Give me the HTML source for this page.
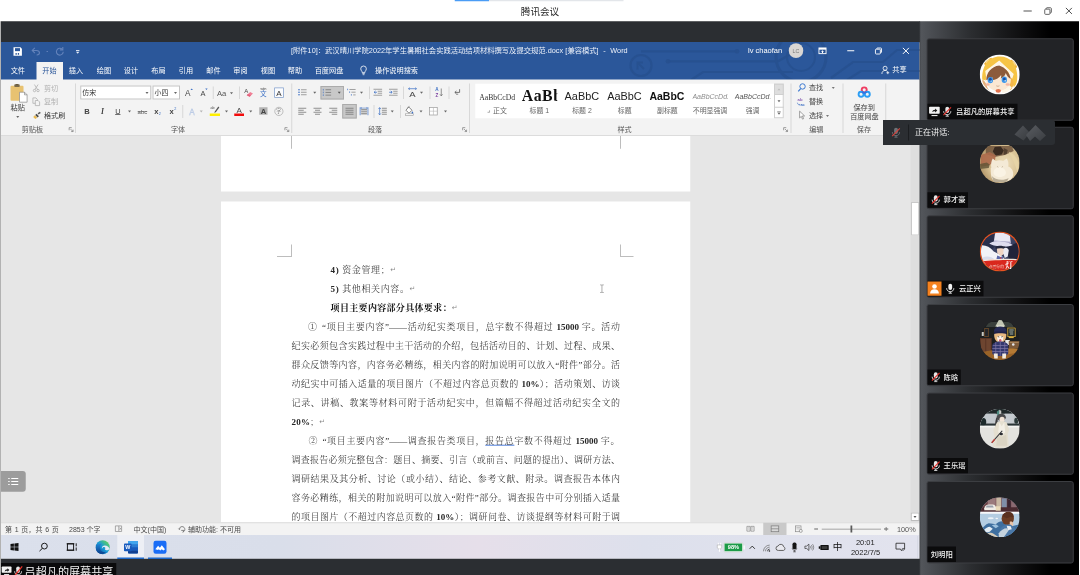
<!DOCTYPE html>
<html lang="zh-CN">
<head>
<meta charset="utf-8">
<title>腾讯会议</title>
<style>
*{box-sizing:border-box;margin:0;padding:0}
html,body{width:1080px;height:575px;overflow:hidden;background:#fff}body{position:relative}
body{font-family:"Liberation Sans","Noto Sans CJK SC",sans-serif;color:#333;-webkit-font-smoothing:antialiased}
#wrap{position:absolute;left:0;top:0;width:4320px;height:2300px;overflow:hidden;transform:scale(.25);transform-origin:0 0}#root{position:relative;width:1080px;height:590px;overflow:hidden;background:#fff;zoom:4;filter:blur(.35px)}
.abs{position:absolute}
.t{position:absolute;white-space:nowrap;line-height:1;transform:translate(-50%,-50%)}
.tl{position:absolute;white-space:nowrap;line-height:1;transform:translate(0,-50%)}
/* Tencent meeting chrome */
#tmtitle{left:540px;top:12px;font-size:9.6px;color:#2a2a2a}
#darktop{left:1px;top:21.3px;width:919px;height:21px;background:#2b2e32}
#darkbot{left:1px;top:558.7px;width:919px;height:32px;background:#2b2e32}
/* Word */
#wtitle{left:1px;top:42px;width:918.6px;height:38px;background:#2b579a;overflow:hidden}
#ribbon{left:1px;top:79.6px;width:918.6px;height:56.3px;background:#f3f3f3;border-bottom:1px solid #d2d2d2}
#doc{left:1px;top:135.4px;width:918.6px;height:387px;background:#e6e6e6;overflow:hidden}
#status{left:1px;top:522.3px;width:918.6px;height:12.6px;background:#f3f3f3;border-top:1px solid #dcdcdc}
#taskbar{left:1px;top:534.9px;width:918.6px;height:23.9px;background:linear-gradient(90deg,#dbe0ec 0%,#d9deea 30%,#e6dfea 52%,#dde0ec 70%,#e2e3ee 100%)}
/* right panel */
#panel{left:919.6px;top:21.3px;width:159.3px;height:569px;background:linear-gradient(90deg,#3a3d41 0,#3a3d41 .6px,#53565b 1.2px,#4d5055 8px,#2c2e31 50px,#0d0d0e 105px,#000 130px)}
.card{position:absolute;left:926.6px;width:147.1px;height:82.4px;background:#222326;border:1.2px solid #3c3e42;border-radius:2.5px}

.card .av{position:absolute;left:52.2px;top:15.2px;width:40px;height:40px}
.lab{position:absolute;left:0;bottom:0.5px;height:15.4px;background:#0b0b0c;color:#f4f4f4;font-size:7.3px;font-weight:500;line-height:15.4px;white-space:nowrap;padding-left:16px;padding-right:2.6px}
.lab svg{position:absolute}
.mic{left:3.2px;top:2.2px;width:10px;height:11px}
#tip{left:882.9px;top:119.9px;width:172px;height:25.1px;background:#2b2e32;border-radius:0 3px 3px 0}

.w{color:#fff;font-size:7.15px}
.tab{position:absolute;top:70.6px;white-space:nowrap;line-height:1;transform:translate(-50%,-50%);font-size:7.15px;color:#fff}
#tabon{left:36.6px;top:62px;width:26.4px;height:18px;background:#f3f3f3}
svg.i{position:absolute;overflow:visible}

.r{position:absolute;white-space:nowrap;line-height:1;transform:translate(-50%,-50%);font-size:7.1px;color:#444}
.rl{position:absolute;white-space:nowrap;line-height:1;transform:translate(0,-50%);font-size:7.1px;color:#444}
.sep{position:absolute;width:1px;background:#d8d8d8}
.arr{position:absolute;width:0;height:0;border-left:1.7px solid transparent;border-right:1.7px solid transparent;border-top:2px solid #666;transform:translate(-50%,-50%)}
.box{position:absolute;background:#fff;border:1px solid #c4c4c4}
.hl{position:absolute;background:#c8c8c8;border:1px solid #ababab}
.gl{color:#555}

.page{position:absolute;left:221px;width:469.3px;background:#fff}
.ln{position:absolute;left:291.5px;width:328.6px;height:12px;line-height:12px;font-family:"Liberation Serif","Noto Serif CJK SC",serif;font-size:9px;font-weight:300;color:#1e1e1e;white-space:nowrap;text-align:justify;text-align-last:justify}
.ln.s{text-align:left;text-align-last:left;letter-spacing:.62px;width:auto}
.ln b{font-weight:700;color:#111}
.pm{color:#8c8c8c;font-family:"DejaVu Sans",sans-serif;font-size:7px;position:relative;top:-1px;letter-spacing:0;font-weight:400}
.crop{position:absolute;background:#bdbdbd}
.num{font-family:"Liberation Serif",serif;font-weight:700;color:#262626}

.st{position:absolute;white-space:nowrap;line-height:1;transform:translate(0,-50%);font-size:7px;color:#4a4a4a;top:529.2px}
.tk{position:absolute;white-space:nowrap;line-height:1;transform:translate(-50%,-50%);color:#1a1a1a}
</style>
</head>
<body>
<div id="wrap"><div id="root">
<div id="tmtitle" class="t">腾讯会议</div>
<span class="abs" style="left:454.700px;top:0;width:34.300px;height:1.300px;background:#4a9cf5"></span><span class="abs" style="left:489px;top:0;width:134.600px;height:1.200px;background:#e3e6ea"></span><span class="abs" style="left:1023.400px;top:10.600px;width:8.400px;height:1px;background:#555"></span><svg class="i" style="left:1044.300px;top:7.200px;width:7.600px;height:7.600px" viewBox="0 0 7.600 7.600"><rect x=".5" y="1.900" width="5.200" height="5.200" rx=".8" fill="none" stroke="#555" stroke-width=".9"/><path d="M1.900 1.800V1.300c0-.4.300-.8.800-.8h3.600c.4 0 .8.400.8.800v3.600c0 .5-.4.800-.8.800h-.5" fill="none" stroke="#555" stroke-width=".9"/></svg><svg class="i" style="left:1065.500px;top:7.600px;width:6.800px;height:6.800px" viewBox="0 0 6.800 6.800"><path d="M.4.400l6 6M6.400.4l-6 6" stroke="#444" stroke-width=".95"/></svg>
<span class="abs" style="left:0;top:21.3px;width:1px;height:569px;background:#b2b2b2"></span><div id="darktop" class="abs"></div>
<div id="wtitle" class="abs"><svg class="i" style="left:600px;top:0;width:319px;height:38px" viewBox="600 42 319 38"><g fill="none" stroke="#27508f" stroke-width="2.200" opacity=".85"><circle cx="640" cy="65.500" r="10.500"/><path d="M636.500 69.500v-7h5.500M636.500 62.500l6.500 6.500" stroke-width="1.800"/><path d="M667 61.300h110l16 -9"/><path d="M640 51.300h96"/><circle cx="800" cy="57" r="25" stroke-width="3"/><circle cx="800" cy="57" r="14" stroke-width="2"/><path d="M690 80l12-8h90"/><path d="M830 78l22-16h30l14-12h24"/><path d="M846 80l14-9h60"/></g><g fill="#27508f" opacity=".85"><circle cx="667" cy="61.300" r="2.400"/><circle cx="736" cy="51.300" r="2.400"/></g></svg></div>
<svg class="i" style="left:13.5px;top:47.2px;width:8.400px;height:8.400px" viewBox="0 0 8.400 8.400"><path d="M0 0h7l1.400 1.400v7H0z" fill="#fff"/><rect x="1.500" y="0.900" width="5" height="3" fill="#2b579a"/><rect x="2" y="5.800" width="1.300" height="1.700" fill="#2b579a"/><rect x="4.300" y="5.800" width="1.300" height="1.700" fill="#2b579a"/></svg>
<svg class="i" style="left:31.200px;top:47.300px;width:9px;height:8px" viewBox="0 0 9 8"><path d="M3.600 0.600L1 3.200l2.600 2.600M1 3.200h4.200c1.900 0 3 1.200 3 2.400S7 7.800 5.400 7.800" fill="none" stroke="#6483bb" stroke-width="1.100"/></svg>
<span class="abs" style="left:46.500px;top:51px;width:1.600px;height:1px;background:#5f7fb8"></span>
<svg class="i" style="left:55.500px;top:47px;width:8.600px;height:8.600px" viewBox="0 0 8.600 8.600"><path d="M6.800 2.400A3.400 3.400 0 1 0 7.700 4.700" fill="none" stroke="#6483bb" stroke-width="1.100"/><path d="M7.300 0v2.900H4.400" fill="none" stroke="#6483bb" stroke-width="1.100"/></svg>
<svg class="i" style="left:76px;top:50px;width:3.400px;height:4px" viewBox="0 0 3.400 4"><rect width="3.400" height=".9" fill="#e8eef8"/><path d="M0 1.800h3.400L1.700 3.800z" fill="#e8eef8"/></svg>
<span class="tl w" style="left:291px;top:50.700px;color:#eef2fa;font-size:7.3px;word-spacing:.3px">[附件10]：武汉晴川学院2022年学生暑期社会实践活动结项材料撰写及提交规范.docx [兼容模式]&nbsp; -&nbsp; Word</span>
<span class="tl w" style="left:748px;top:50.700px;font-size:7.500px">lv chaofan</span>
<span class="abs" style="left:788.700px;top:43.300px;width:14.600px;height:14.600px;border-radius:50%;background:#d9d6d3"></span><span class="t" style="left:796px;top:50.900px;font-size:5.300px;color:#7a7a7a">LC</span>
<svg class="i" style="left:818.400px;top:47.400px;width:8px;height:6.600px" viewBox="0 0 8 6.600"><rect x=".45" y=".45" width="7.100" height="5.700" fill="none" stroke="#fff" stroke-width=".9"/><rect x=".45" y=".45" width="7.100" height="1.700" fill="#fff"/><path d="M4 2.700l1.500 1.600H4.500v1.200h-1V4.300h-1z" fill="#fff"/></svg>
<span class="abs" style="left:847.300px;top:50.300px;width:7px;height:1px;background:#fff"></span>
<svg class="i" style="left:875px;top:47.400px;width:7px;height:7px" viewBox="0 0 7 7"><rect x=".45" y="1.700" width="4.900" height="4.800" rx=".8" fill="none" stroke="#fff" stroke-width=".9"/><path d="M1.800 1.600V1.200c0-.4.300-.7.700-.7h3.300c.4 0 .7.300.7.700v3.300c0 .4-.3.700-.7.700h-.4" fill="none" stroke="#fff" stroke-width=".9"/></svg>
<svg class="i" style="left:902.600px;top:47.400px;width:6.800px;height:6.800px" viewBox="0 0 6.800 6.800"><path d="M.4.400l6 6M6.400.4l-6 6" stroke="#fff" stroke-width="1"/></svg>
<div id="tabon" class="abs"></div>
<span class="tab" style="left:17.8px;color:#fff">文件</span>
<span class="tab" style="left:49.5px;color:#2b579a">开始</span>
<span class="tab" style="left:76px;color:#fff">插入</span>
<span class="tab" style="left:104px;color:#fff">绘图</span>
<span class="tab" style="left:131px;color:#fff">设计</span>
<span class="tab" style="left:158.5px;color:#fff">布局</span>
<span class="tab" style="left:186px;color:#fff">引用</span>
<span class="tab" style="left:213.5px;color:#fff">邮件</span>
<span class="tab" style="left:240.5px;color:#fff">审阅</span>
<span class="tab" style="left:268px;color:#fff">视图</span>
<span class="tab" style="left:295px;color:#fff">帮助</span>
<span class="tab" style="left:329px;color:#fff">百度网盘</span>
<span class="tab" style="left:396.5px;color:#fff">操作说明搜索</span>
<svg class="i" style="left:360.200px;top:65.500px;width:6.600px;height:9.600px" viewBox="0 0 6.600 9.600"><path d="M3.300.5A2.800 2.800 0 0 0 .5 3.300c0 1.200.7 1.800 1.100 2.500.3.500.4.900.4 1.400h2.600c0-.5.100-.9.400-1.400.4-.7 1.100-1.300 1.100-2.500A2.800 2.800 0 0 0 3.300.5z" fill="none" stroke="#fff" stroke-width=".8"/><path d="M2.100 8.100h2.400M2.400 9.200h1.800" stroke="#fff" stroke-width=".7"/></svg>
<svg class="i" style="left:881.500px;top:65.800px;width:8px;height:8.400px" viewBox="0 0 8 8.400"><circle cx="3.600" cy="2.500" r="2" fill="none" stroke="#fff" stroke-width=".8"/><path d="M.4 8.200c0-2.300 1.400-3.500 3.200-3.500 1 0 1.800.3 2.400 1" fill="none" stroke="#fff" stroke-width=".8"/><path d="M6.300 5.600v2.800M4.900 7h2.800" stroke="#fff" stroke-width=".8"/></svg>
<span class="tl w" style="left:892.300px;top:69.600px">共享</span>
<div id="ribbon" class="abs"></div>
<span class="sep" style="left:75px;top:83.5px;height:49.5px"></span>
<span class="sep" style="left:291.2px;top:83.5px;height:49.5px"></span>
<span class="sep" style="left:469px;top:83.5px;height:49.5px"></span>
<span class="sep" style="left:790.5px;top:83.5px;height:49.5px"></span>
<span class="sep" style="left:842.4px;top:83.5px;height:49.5px"></span>
<span class="sep" style="left:885.3px;top:83.5px;height:49.5px"></span>
<span class="r gl" style="left:32.5px;top:130px;">剪贴板</span>
<span class="r gl" style="left:178px;top:130px;">字体</span>
<span class="r gl" style="left:375px;top:130px;">段落</span>
<span class="r gl" style="left:624.5px;top:130px;">样式</span>
<span class="r gl" style="left:816.3px;top:130px;">编辑</span>
<span class="r gl" style="left:863.9px;top:130px;">保存</span>
<svg class="i" style="left:68.70px;top:127.30px;width:4.6px;height:4.6px" viewBox="0 0 4.6 4.6"><path d="M.4 3V.4H3" fill="none" stroke="#777" stroke-width=".7"/><path d="M1.800 1.800l2.400 2.400M4.300 2.400v1.900H2.400" fill="none" stroke="#777" stroke-width=".7"/></svg>
<svg class="i" style="left:284.50px;top:127.30px;width:4.6px;height:4.6px" viewBox="0 0 4.6 4.6"><path d="M.4 3V.4H3" fill="none" stroke="#777" stroke-width=".7"/><path d="M1.800 1.800l2.400 2.400M4.300 2.400v1.900H2.400" fill="none" stroke="#777" stroke-width=".7"/></svg>
<svg class="i" style="left:462.30px;top:127.30px;width:4.6px;height:4.6px" viewBox="0 0 4.6 4.6"><path d="M.4 3V.4H3" fill="none" stroke="#777" stroke-width=".7"/><path d="M1.800 1.800l2.400 2.400M4.300 2.400v1.900H2.400" fill="none" stroke="#777" stroke-width=".7"/></svg>
<svg class="i" style="left:783.30px;top:127.30px;width:4.6px;height:4.6px" viewBox="0 0 4.6 4.6"><path d="M.4 3V.4H3" fill="none" stroke="#777" stroke-width=".7"/><path d="M1.800 1.800l2.400 2.400M4.300 2.400v1.900H2.400" fill="none" stroke="#777" stroke-width=".7"/></svg>
<svg class="i" style="left:10.60px;top:83.90px;width:17px;height:18.5px" viewBox="0 0 17 18.5"><rect x="0" y="1.800" width="13" height="15" rx="1" fill="#e8c271"/><rect x="3.800" y=".3" width="5.400" height="2.800" rx=".8" fill="#7a6a4a"/><rect x="5.300" y="0" width="2.400" height="1.300" fill="#6a5c40"/><path d="M9 8.200h5l2.600 2.600v7.400H9z" fill="#fff" stroke="#8a8a8a" stroke-width=".7"/><path d="M14 8.200v2.600h2.600" fill="none" stroke="#8a8a8a" stroke-width=".7"/></svg>
<span class="r" style="left:17.7px;top:107.8px;font-size:7.2px;color:#3a3a3a">粘贴</span>
<span class="arr" style="left:17.7px;top:116.9px;border-top-color:#666"></span>
<svg class="i" style="left:32.95px;top:84.30px;width:6.5px;height:8px" viewBox="0 0 6.5 8"><path d="M1.400 0.300L4.600 5.300M5.100 0.300L1.900 5.300" stroke="#b0b0b0" stroke-width=".8"/><circle cx="1.500" cy="6.300" r="1.200" fill="none" stroke="#b0b0b0" stroke-width=".8"/><circle cx="5" cy="6.300" r="1.200" fill="none" stroke="#b0b0b0" stroke-width=".8"/></svg>
<span class="rl" style="left:44px;top:88.4px;color:#b2b2b2">剪切</span>
<svg class="i" style="left:32.45px;top:97.45px;width:7.5px;height:8.5px" viewBox="0 0 7.5 8.5"><path d="M.4.400h3l1.400 1.400v4H.4z" fill="none" stroke="#b0b0b0" stroke-width=".8"/><path d="M2.800 3h2.800l1.500 1.500v3.600H2.800z" fill="#f3f3f3" stroke="#b0b0b0" stroke-width=".8"/></svg>
<span class="rl" style="left:44px;top:101.8px;color:#b2b2b2">复制</span>
<svg class="i" style="left:33.00px;top:111.55px;width:8px;height:7.5px" viewBox="0 0 8 7.5"><path d="M4.600 1.800L6.800.2l1 1.200-2.200 1.700z" fill="#5a5a5a"/><path d="M3.600 2.200l2.300 2.500-1.400 1.300L2.200 3.500z" fill="#4a4a4a"/><path d="M1.900 3.800l2.300 2.500-1.900 1.100L.2 5.500z" fill="#e8b84f"/></svg>
<span class="rl" style="left:44px;top:115.6px;color:#3a3a3a">格式刷</span>
<span class="box" style="left:80.300px;top:85.600px;width:70.900px;height:13.800px"></span>
<span class="box" style="left:152.600px;top:85.600px;width:27.300px;height:13.800px"></span>
<span class="rl" style="left:82.3px;top:92.9px;font-size:6.9px;color:#333">仿宋</span>
<span class="rl" style="left:154.6px;top:92.9px;font-size:6.9px;color:#333">小四</span>
<span class="arr" style="left:147px;top:93px;border-top-color:#666"></span>
<span class="arr" style="left:175.6px;top:93px;border-top-color:#666"></span>
<span class="r" style="left:187.8px;top:93.1px;font-size:8.200px;color:#444">A</span>
<svg class="i" style="left:190.40px;top:88.50px;width:2.4px;height:1.6px" viewBox="0 0 2.4 1.6"><path d="M0 1.600L1.200 0l1.200 1.600z" fill="#3b6fc4"/></svg>
<span class="r" style="left:202.9px;top:93.4px;font-size:7.400px;color:#444">A</span>
<svg class="i" style="left:205.20px;top:88.60px;width:2.4px;height:1.6px" viewBox="0 0 2.4 1.6"><path d="M0 0h2.400L1.200 1.600z" fill="#3b6fc4"/></svg>
<span class="sep" style="left:212.8px;top:86.5px;height:12.5px"></span>
<span class="r" style="left:221.6px;top:92.9px;font-size:7.600px;color:#555">Aa</span>
<span class="arr" style="left:231.6px;top:93.3px;border-top-color:#666"></span>
<span class="sep" style="left:239.1px;top:86.5px;height:12.5px"></span>
<span class="r" style="left:246.2px;top:90.6px;font-size:6px;color:#444">A</span>
<svg class="i" style="left:246.70px;top:92.00px;width:6.2px;height:4.8px" viewBox="0 0 6.2 4.8"><path d="M3.400 0L6.200 1.600 2.900 4.800 0 3.200z" fill="#ef7f95"/><path d="M0 3.200l1.200-1.200 2.900 1.600L2.900 4.800z" fill="#e3607c"/></svg>
<span class="r" style="left:263.4px;top:93.7px;font-size:6.600px;color:#3b6fc4">文</span>
<span class="r" style="left:263.4px;top:88.8px;font-size:3.400px;color:#444;letter-spacing:-.1px">wén</span>
<span class="abs" style="left:274.200px;top:87.500px;width:9.600px;height:10.200px;border:.8px solid #7f9cc9;background:#fbfcfe"></span>
<span class="r" style="left:279px;top:92.9px;font-size:8px;color:#333">A</span>
<span class="r" style="left:86.9px;top:111.2px;font-size:7.600px;font-weight:700;color:#444">B</span>
<span class="r" style="left:102.6px;top:111.2px;font-size:7.600px;font-style:italic;font-weight:700;font-family:Liberation Serif,serif;color:#444">I</span>
<span class="r" style="left:117.8px;top:110.9px;font-size:7.400px;color:#444;text-decoration:underline;text-underline-offset:.6px;text-decoration-thickness:.7px">U</span>
<span class="arr" style="left:129.5px;top:111.6px;border-top-color:#666"></span>
<span class="r" style="left:142.4px;top:111.4px;font-size:6px;color:#555;text-decoration:line-through;text-decoration-thickness:.6px">abc</span>
<span class="r" style="left:156.3px;top:111.4px;font-size:7.600px;font-weight:700;color:#444">x</span>
<span class="r" style="left:159.9px;top:113.6px;font-size:3.800px;color:#3b6fc4">2</span>
<span class="r" style="left:171.6px;top:111.4px;font-size:7.600px;font-weight:700;color:#444">x</span>
<span class="r" style="left:175.3px;top:108.6px;font-size:3.800px;color:#3b6fc4">2</span>
<span class="sep" style="left:182.3px;top:105px;height:13px"></span>
<svg class="i" style="left:187.400px;top:106.600px;width:9px;height:9.600px" viewBox="0 0 9 9.600"><text x="4.500" y="8.200" text-anchor="middle" font-size="8.200" font-family="Liberation Sans,sans-serif" fill="#f8f9fc" stroke="#bccbe4" stroke-width=".5">A</text></svg>
<span class="arr" style="left:201.3px;top:111.6px;border-top-color:#b5b5b5"></span>
<svg class="i" style="left:210.40px;top:106.10px;width:9px;height:7px" viewBox="0 0 9 7"><path d="M4.300 5.400L7.800.6l1 .8-3.500 4.800-1.600.6z" fill="#555"/><text x="0" y="3.400" font-size="3.600" font-family="Liberation Sans,sans-serif" fill="#444">ab</text></svg>
<span class="abs" style="left:209.800px;top:113.600px;width:10.100px;height:2.500px;background:#ffef00"></span>
<span class="arr" style="left:226.5px;top:111.6px;border-top-color:#666"></span>
<span class="r" style="left:239.1px;top:109.9px;font-size:8px;color:#444">A</span>
<span class="abs" style="left:234.300px;top:113.600px;width:9.600px;height:2.500px;background:#f20c0c"></span>
<span class="arr" style="left:250.8px;top:111.6px;border-top-color:#666"></span>
<span class="abs" style="left:259.300px;top:107.200px;width:8.300px;height:7.600px;background:#b2b2b2"></span>
<span class="r" style="left:263.5px;top:111.1px;font-size:7.600px;font-weight:700;color:#444">A</span>
<span class="abs" style="left:274.400px;top:107px;width:8.800px;height:8.800px;border:.7px solid #8a8a8a;border-radius:50%"></span>
<span class="r" style="left:278.8px;top:111.5px;font-size:5.200px;color:#777">字</span>
<svg class="i" style="left:298.00px;top:88.80px;width:8.6px;height:7px" viewBox="0 0 8.6 7"><circle cx="1" cy="1" r=".8" fill="#3b6fc4"/><circle cx="1" cy="3.500" r=".8" fill="#3b6fc4"/><circle cx="1" cy="6" r=".8" fill="#3b6fc4"/><path d="M3 1h5.600M3 3.500h5.600M3 6h5.600" stroke="#8a8a8a" stroke-width=".8"/></svg>
<span class="arr" style="left:314.8px;top:92.7px;border-top-color:#666"></span>
<span class="hl" style="left:320.500px;top:86px;width:23.500px;height:13.400px"></span>
<svg class="i" style="left:322.50px;top:88.70px;width:8.6px;height:7.4px" viewBox="0 0 8.6 7.4"><path d="M.8.200v1.600M.8 2.900v1.600M.8 5.600v1.600" stroke="#3b6fc4" stroke-width=".7"/><path d="M3 1h5.600M3 3.700h5.600M3 6.400h5.600" stroke="#777" stroke-width=".8"/></svg>
<span class="arr" style="left:339.3px;top:92.7px;border-top-color:#555"></span>
<svg class="i" style="left:347.00px;top:88.60px;width:8.6px;height:7.4px" viewBox="0 0 8.6 7.4"><path d="M.6.200v1.500M2.600 2.900v1.500M4.400 5.600v1.500" stroke="#3b6fc4" stroke-width=".7"/><path d="M2.400 1h6.200M4.400 3.700h4.200M6.200 6.400h2.400" stroke="#8a8a8a" stroke-width=".8"/></svg>
<span class="arr" style="left:361.4px;top:92.7px;border-top-color:#666"></span>
<span class="sep" style="left:369.1px;top:86.5px;height:12.5px"></span>
<svg class="i" style="left:373.40px;top:88.80px;width:8.6px;height:7px" viewBox="0 0 8.6 7"><path d="M0 .5h8.600M4.200 2.500h4.400M4.200 4.500h4.400M0 6.500h8.600" stroke="#8a8a8a" stroke-width=".8"/><path d="M3.400 3.500H.8M2 2.200L.6 3.500 2 4.800" fill="none" stroke="#3b6fc4" stroke-width=".8"/></svg>
<svg class="i" style="left:389.00px;top:88.80px;width:8.6px;height:7px" viewBox="0 0 8.6 7"><path d="M0 .5h8.600M4.200 2.500h4.400M4.200 4.500h4.400M0 6.500h8.600" stroke="#8a8a8a" stroke-width=".8"/><path d="M.2 3.500h2.800M1.800 2.200l1.400 1.300-1.400 1.300" fill="none" stroke="#3b6fc4" stroke-width=".8"/></svg>
<span class="sep" style="left:403px;top:86.5px;height:12.5px"></span>
<span class="r" style="left:412.5px;top:93.9px;font-size:7.600px;color:#444;transform:translate(-50%,-50%) scaleX(1.250)">A</span>
<svg class="i" style="left:408.00px;top:87.40px;width:9px;height:2.4px" viewBox="0 0 9 2.4"><path d="M.5 1.200h8M1.800.2L.5 1.200l1.300 1M7.200.2l1.300 1-1.300 1" fill="none" stroke="#3b6fc4" stroke-width=".7"/></svg>
<span class="arr" style="left:421.6px;top:92.7px;border-top-color:#666"></span>
<span class="sep" style="left:429.6px;top:86.5px;height:12.5px"></span>
<span class="r" style="left:436.8px;top:89.9px;font-size:4.600px;color:#3b6fc4;font-weight:700">A</span>
<span class="r" style="left:436.8px;top:95.2px;font-size:4.600px;color:#7a3fa0;font-weight:700">Z</span>
<svg class="i" style="left:439.80px;top:88.40px;width:3px;height:8px" viewBox="0 0 3 8"><path d="M1.500 0v7.300M.2 5.800l1.300 1.600 1.300-1.600" fill="none" stroke="#666" stroke-width=".7"/></svg>
<span class="sep" style="left:448.4px;top:86.5px;height:12.5px"></span>
<svg class="i" style="left:454.00px;top:89.00px;width:6px;height:6px" viewBox="0 0 6 6"><path d="M5.600.2v3.200H1M2.400 2L.8 3.400 2.400 4.800" fill="none" stroke="#555" stroke-width=".8"/><path d="M2.200 5.200h2" stroke="#555" stroke-width=".7"/></svg>
<svg class="i" style="left:298.30px;top:107.70px;width:8px;height:7px" viewBox="0 0 8 7"><path d="M0 0.5h8" stroke="#777" stroke-width=".8"/><path d="M0 2.5h5.5" stroke="#777" stroke-width=".8"/><path d="M0 4.5h8" stroke="#777" stroke-width=".8"/><path d="M0 6.5h5.5" stroke="#777" stroke-width=".8"/></svg>
<svg class="i" style="left:313.40px;top:107.70px;width:8px;height:7px" viewBox="0 0 8 7"><path d="M0.0 0.5h8" stroke="#777" stroke-width=".8"/><path d="M1.5 2.5h5" stroke="#777" stroke-width=".8"/><path d="M0.0 4.5h8" stroke="#777" stroke-width=".8"/><path d="M1.5 6.5h5" stroke="#777" stroke-width=".8"/></svg>
<svg class="i" style="left:329.30px;top:107.70px;width:8px;height:7px" viewBox="0 0 8 7"><path d="M0 0.5h8" stroke="#777" stroke-width=".8"/><path d="M2.5 2.5h5.5" stroke="#777" stroke-width=".8"/><path d="M0 4.5h8" stroke="#777" stroke-width=".8"/><path d="M2.5 6.5h5.5" stroke="#777" stroke-width=".8"/></svg>
<span class="hl" style="left:342.200px;top:104px;width:14.600px;height:14.500px"></span>
<svg class="i" style="left:345.50px;top:107.70px;width:8px;height:7px" viewBox="0 0 8 7"><path d="M0 0.5h8" stroke="#777" stroke-width=".8"/><path d="M0 2.5h8" stroke="#777" stroke-width=".8"/><path d="M0 4.5h8" stroke="#777" stroke-width=".8"/><path d="M0 6.5h8" stroke="#777" stroke-width=".8"/></svg>
<svg class="i" style="left:359.70px;top:107.20px;width:8.6px;height:8px" viewBox="0 0 8.6 8"><rect x="1.400" y="1.600" width="5.800" height="5.600" fill="#9a9a9a"/><path d="M1.400 3.400h5.800M1.400 5.200h5.800" stroke="#f3f3f3" stroke-width=".6"/><path d="M.4 0v8M8.200 0v8" stroke="#3b6fc4" stroke-width=".7"/><path d="M1 .8h6.600M2 .1L1 .8l1 .7M6.600.1l1 .7-1 .7" fill="none" stroke="#3b6fc4" stroke-width=".5"/></svg>
<span class="sep" style="left:373.4px;top:105px;height:13px"></span>
<svg class="i" style="left:378.20px;top:107.20px;width:8.6px;height:8px" viewBox="0 0 8.6 8"><path d="M3.600 1h5M3.600 3h5M3.600 5h5M3.600 7h5" stroke="#777" stroke-width=".8"/><path d="M1.400.4v7.200M.2 1.800L1.400.4l1.200 1.400M.2 6.200l1.200 1.400 1.200-1.400" fill="none" stroke="#3b6fc4" stroke-width=".7"/></svg>
<span class="arr" style="left:392.3px;top:111.6px;border-top-color:#666"></span>
<span class="sep" style="left:400.1px;top:105px;height:13px"></span>
<svg class="i" style="left:404.90px;top:106.30px;width:9px;height:8.6px" viewBox="0 0 9 8.6"><path d="M3.600.6L7 4 4 7 1 4z" fill="#fff" stroke="#666" stroke-width=".8"/><path d="M2.600 1.600L4.400.2" stroke="#666" stroke-width=".7"/><path d="M7.400 5c.6.800.9 1.300.9 1.700a.9.900 0 0 1-1.800 0c0-.4.300-.9.900-1.700z" fill="#3b6fc4"/><rect x=".4" y="7.600" width="8.200" height="1.400" fill="#fff" stroke="#888" stroke-width=".5"/></svg>
<span class="arr" style="left:421px;top:111.6px;border-top-color:#666"></span>
<svg class="i" style="left:429.20px;top:107.00px;width:8.4px;height:8.4px" viewBox="0 0 8.4 8.4"><rect x=".4" y=".4" width="7.600" height="7.600" fill="#fff" stroke="#9a9a9a" stroke-width=".7"/><path d="M4.200.4v7.600M.4 4.200h7.600" stroke="#b5b5b5" stroke-width=".6"/></svg>
<span class="arr" style="left:445.5px;top:111.6px;border-top-color:#666"></span>
<span class="abs" style="left:475.300px;top:83.700px;width:298.800px;height:34.600px;background:#fff;overflow:hidden" id="gal"></span>
<span class="abs" style="left:774.100px;top:83.700px;width:9.700px;height:34.600px;background:#fff;border:1px solid #cfcfcf"></span>
<span class="abs" style="left:774.100px;top:83.700px;width:9.700px;height:11.400px;background:#dedede;border:1px solid #cfcfcf"></span>
<span class="abs" style="left:774.100px;top:106.700px;width:9.700px;height:1px;background:#cfcfcf"></span>
<span class="arr" style="left:779px;top:101.2px;border-top-color:#666"></span>
<span class="arr" style="left:779px;top:113.8px;border-top-color:#666"></span>
<span class="abs" style="left:777.200px;top:111.400px;width:3.600px;height:.8px;background:#666"></span>
<svg class="i" style="left:777.50px;top:88.50px;width:3px;height:1.8px" viewBox="0 0 3 1.8"><path d="M0 1.800L1.500 0 3 1.800z" fill="#bdbdbd"/></svg>
<span class="abs" style="left:479.2px;top:84px;width:36px;height:22px;overflow:hidden"><span style="position:absolute;left:0;top:9.200px;font:7.700px/1 Liberation Serif,serif;color:#333;white-space:nowrap">AaBbCcDd</span></span>
<span class="abs" style="left:521.8px;top:84px;width:35.4px;height:22px;overflow:hidden"><span style="position:absolute;left:0;top:3.400px;font:700 15.800px/1 Liberation Serif,serif;color:#111;white-space:nowrap;letter-spacing:.5px">AaBb</span></span>
<span class="abs" style="left:564.6px;top:84px;width:36px;height:22px;overflow:hidden"><span style="position:absolute;left:0;top:7.200px;font:10.900px/1 Liberation Sans,sans-serif;color:#222;white-space:nowrap">AaBbC</span></span>
<span class="abs" style="left:607.2px;top:84px;width:36px;height:22px;overflow:hidden"><span style="position:absolute;left:0;top:7.200px;font:10.900px/1 Liberation Sans,sans-serif;color:#222;white-space:nowrap">AaBbC</span></span>
<span class="abs" style="left:649.4px;top:84px;width:35.4px;height:22px;overflow:hidden"><span style="position:absolute;left:0;top:7.200px;font:700 10.500px/1 Liberation Sans,sans-serif;color:#111;white-space:nowrap">AaBbCc</span></span>
<span class="abs" style="left:692.4px;top:84px;width:35.6px;height:22px;overflow:hidden"><span style="position:absolute;left:0;top:9.400px;font:italic 7px/1 Liberation Sans,sans-serif;color:#8c8c8c;white-space:nowrap">AaBbCcDd.</span></span>
<span class="abs" style="left:734.8px;top:84px;width:35.6px;height:22px;overflow:hidden"><span style="position:absolute;left:0;top:9.400px;font:italic 7px/1 Liberation Sans,sans-serif;color:#555;white-space:nowrap">AaBbCcDd.</span></span>
<span class="r" style="left:500px;top:110.5px;color:#666;font-size:6.900px">正文</span>
<span class="r" style="left:539.4px;top:110.5px;color:#666;font-size:6.900px">标题 1</span>
<span class="r" style="left:582px;top:110.5px;color:#666;font-size:6.900px">标题 2</span>
<span class="r" style="left:624.7px;top:110.5px;color:#666;font-size:6.900px">标题</span>
<span class="r" style="left:667.4px;top:110.5px;color:#666;font-size:6.900px">副标题</span>
<span class="r" style="left:710px;top:110.5px;color:#666;font-size:6.900px">不明显强调</span>
<span class="r" style="left:752.6px;top:110.5px;color:#666;font-size:6.900px">强调</span>
<svg class="i" style="left:487.20px;top:110.10px;width:2.6px;height:2.6px" viewBox="0 0 2.6 2.6"><path d="M.3 2.300h2V.3" fill="none" stroke="#777" stroke-width=".6"/></svg>
<svg class="i" style="left:797.80px;top:83.30px;width:8px;height:8.6px" viewBox="0 0 8 8.6"><circle cx="4.800" cy="3.200" r="2.700" fill="none" stroke="#3b78d0" stroke-width="1"/><path d="M2.900 5.300L.5 8.200" stroke="#3b78d0" stroke-width="1.200"/></svg>
<span class="rl" style="left:808.9px;top:87.8px;">查找</span>
<span class="arr" style="left:833.2px;top:87.9px;border-top-color:#777"></span>
<svg class="i" style="left:797.10px;top:97.50px;width:9px;height:8.4px" viewBox="0 0 9 8.4"><text x=".6" y="3.600" font-size="4.200" font-family="Liberation Sans,sans-serif" font-weight="700" fill="#8a5fb4">ab</text><text x="3.400" y="8.200" font-size="3.800" font-family="Liberation Sans,sans-serif" font-weight="700" fill="#3b6fc4">ac</text><path d="M.4 5.200c0 1.400.8 2 2.200 2M2 6.300l.8.900-.9.800" fill="none" stroke="#3b6fc4" stroke-width=".6"/></svg>
<span class="rl" style="left:808.9px;top:101.9px;">替换</span>
<svg class="i" style="left:799.00px;top:110.80px;width:6px;height:9px" viewBox="0 0 6 9"><path d="M.6.400v6.800l1.700-1.600 1.200 2.800 1.100-.5-1.200-2.700h2.200z" fill="#fff" stroke="#7a7a7a" stroke-width=".7"/></svg>
<span class="rl" style="left:808.9px;top:115.7px;">选择</span>
<span class="arr" style="left:827.6px;top:115.9px;border-top-color:#777"></span>
<svg class="i" style="left:857.50px;top:86.20px;width:13.4px;height:11.6px" viewBox="0 0 13.4 11.6"><circle cx="6.700" cy="3.600" r="2.500" fill="none" stroke="#ef3e63" stroke-width="1.900"/><circle cx="3.600" cy="8" r="2.500" fill="none" stroke="#2b9df4" stroke-width="1.900"/><circle cx="9.800" cy="8" r="2.500" fill="none" stroke="#2b9df4" stroke-width="1.900"/><path d="M4.400 5.600a3.400 3.400 0 0 0 4.600 0" fill="none" stroke="#3a6fe0" stroke-width="1.500"/></svg>
<span class="r" style="left:864.2px;top:107.8px;font-size:7.200px">保存到</span>
<span class="r" style="left:864.4px;top:116.7px;">百度网盘</span>
<div id="doc" class="abs"></div>
<div class="page" style="top:135.9px;height:55.7px"></div>
<div class="page" style="top:201.5px;height:322px"></div>
<span class="crop" style="left:291px;top:135.9px;width:1px;height:12.8px"></span>
<span class="crop" style="left:620px;top:135.9px;width:1px;height:12.8px"></span>
<span class="crop" style="left:291px;top:244.4px;width:1px;height:12.6px"></span><span class="crop" style="left:277px;top:256px;width:15px;height:1px"></span>
<span class="crop" style="left:620px;top:244.4px;width:1px;height:12.6px"></span><span class="crop" style="left:620px;top:256px;width:13.5px;height:1px"></span>
<div class="ln s" style="top:263.7px;left:330.6px"><span class="num">4)</span> 资金管理；<span class="pm">↵</span></div>
<div class="ln s" style="top:282.7px;left:330.6px"><span class="num">5)</span> 其他相关内容。<span class="pm">↵</span></div>
<div class="ln s" style="top:301.7px;left:330.6px;letter-spacing:.32px"><b>项目主要内容部分具体要求：</b><span class="pm">↵</span></div>
<div class="ln " style="top:320.7px;left:308px;width:312px">①<span style="display:inline-block;width:4.2px"></span>“项目主要内容”——活动纪实类项目，总字数不得超过 <span class="num">15000</span> 字。活动</div>
<div class="ln " style="top:339.7px;">纪实必须包含实践过程中主干活动的介绍，包括活动目的、计划、过程、成果、</div>
<div class="ln " style="top:358.7px;">群众反馈等内容，内容务必精练，相关内容的附加说明可以放入“附件”部分。活</div>
<div class="ln " style="top:377.7px;">动纪实中可插入适量的项目图片（不超过内容总页数的 <span class="num">10%</span>）；活动策划、访谈</div>
<div class="ln " style="top:396.7px;">记录、讲稿、教案等材料可附于活动纪实中，但篇幅不得超过活动纪实全文的</div>
<div class="ln s" style="top:415.7px;letter-spacing:.2px"><span class="num">20%</span>；<span class="pm">↵</span></div>
<div class="ln " style="top:434.7px;left:308.5px;width:311px">②<span style="display:inline-block;width:4.2px"></span>“项目主要内容”——调查报告类项目，<span style="text-decoration:underline double #3b6fd8;text-decoration-thickness:.5px;text-underline-offset:1px">报告总</span>字数不得超过 <span class="num">15000</span> 字。</div>
<div class="ln " style="top:453.7px;">调查报告必须完整包含：题目、摘要、引言（或前言、问题的提出）、调研方法、</div>
<div class="ln " style="top:472.7px;">调研结果及其分析、讨论（或小结）、结论、参考文献、附录。调查报告本体内</div>
<div class="ln " style="top:491.7px;">容务必精练，相关的附加说明可以放入“附件”部分。调查报告中可分别插入适量</div>
<div class="ln " style="top:510.7px;">的项目图片（不超过内容总页数的 <span class="num">10%</span>）；调研问卷、访谈提纲等材料可附于调</div>
<svg class="i" style="left:599.8px;top:284.6px;width:4.4px;height:8.4px" viewBox="0 0 4.4 8.4"><path d="M.4.400h1.300c.3 0 .5.200.5.500v6.600c0 .3-.2.500-.5.500H.4M4 .4H2.700c-.3 0-.5.200-.5.500M4 8H2.700c-.3 0-.5-.2-.5-.5" fill="none" stroke="#8a8a8a" stroke-width=".7"/></svg>
<span class="abs" style="left:1px;top:471px;width:24.700px;height:20.700px;background:#9c9c9c;border-radius:0 3px 3px 0"></span>
<svg class="i" style="left:8.300px;top:477.500px;width:10px;height:8px" viewBox="0 0 10 8"><path d="M0 1h1.400M0 4h1.400M0 7h1.400M3 1h7M3 4h7M3 7h7" stroke="#fff" stroke-width="1.100"/></svg>
<span class="abs" style="left:910.500px;top:135.400px;width:9.100px;height:387px;background:#dedede"></span>
<span class="abs" style="left:911px;top:202px;width:8.200px;height:33.600px;background:#fff;border:1px solid #c9c9c9"></span>
<span class="abs" style="left:910.800px;top:512.600px;width:8.600px;height:8.300px;background:#fff;border:1px solid #bdbdbd"></span>
<span class="arr" style="left:915.100px;top:517px;border-top-color:#555"></span>
<div id="status" class="abs"></div>
<div id="taskbar" class="abs"></div>
<div id="darkbot" class="abs"></div>
<span class="st" style="left:5px;letter-spacing:.15px;word-spacing:.4px">第 1 页，共 6 页</span>
<span class="st" style="left:69px">2853 个字</span>
<svg class="i" style="left:115.00px;top:525.60px;width:7px;height:6.4px" viewBox="0 0 7 6.4"><path d="M.4.400h3.400v5.600H.4zM3.800.4h2.800v5.600H3.800" fill="none" stroke="#8a8a8a" stroke-width=".7"/><path d="M4.600 2.200l1.600 2M6.200 2.200l-1.600 2" stroke="#8a8a8a" stroke-width=".6"/></svg>
<span class="st" style="left:133.600px">中文(中国)</span>
<svg class="i" style="left:178.30px;top:525.90px;width:7.4px;height:7px" viewBox="0 0 7.4 7"><path d="M1 3.200C1.200 1.600 2.400.6 3.800.6 5.400.6 6.600 1.800 6.600 3.400c0 1-.5 1.800-1.300 2.300" fill="none" stroke="#555" stroke-width=".7"/><path d="M.2 2.600l.9 1 1-.8" fill="none" stroke="#555" stroke-width=".6"/><path d="M3 4.400h2.600l-1 2.200" fill="none" stroke="#555" stroke-width=".7"/></svg>
<span class="st" style="left:188.100px">辅助功能: 不可用</span>
<svg class="i" style="left:746.60px;top:525.80px;width:8px;height:6px" viewBox="0 0 8 6"><path d="M.4.600h3.200v4.800H.4zM4.400.6h3.200v4.800H4.400z" fill="none" stroke="#8a8a8a" stroke-width=".7"/><path d="M1.200 2h1.600M1.200 3.400h1.600M5.200 2h1.600M5.200 3.400h1.600" stroke="#9a9a9a" stroke-width=".5"/></svg>
<span class="abs" style="left:763.300px;top:522.800px;width:23.200px;height:12.100px;background:#c9c9c9"></span>
<svg class="i" style="left:770.70px;top:525.60px;width:8.4px;height:6.6px" viewBox="0 0 8.4 6.6"><rect x=".4" y=".4" width="7.600" height="5.800" fill="#d9d9d9" stroke="#7a7a7a" stroke-width=".7"/><path d="M.4 3.300h7.600" stroke="#7a7a7a" stroke-width=".7"/></svg>
<svg class="i" style="left:795.00px;top:525.50px;width:7.6px;height:7px" viewBox="0 0 7.6 7"><rect x=".4" y=".4" width="5.600" height="5.800" fill="none" stroke="#8a8a8a" stroke-width=".7"/><path d="M1.400 2h3.600M1.400 3.400h3.600" stroke="#9a9a9a" stroke-width=".5"/><circle cx="5.800" cy="5.400" r="1.500" fill="#f3f3f3" stroke="#7a7a7a" stroke-width=".6"/></svg>
<span class="abs" style="left:814.200px;top:528.600px;width:3.800px;height:.9px;background:#666"></span>
<span class="abs" style="left:821.700px;top:528.700px;width:59.300px;height:.8px;background:#8a8a8a"></span>
<span class="abs" style="left:850.400px;top:525.600px;width:1.900px;height:7px;background:#5a5a5a"></span>
<span class="abs" style="left:884px;top:528.600px;width:4.200px;height:.9px;background:#666"></span><span class="abs" style="left:885.700px;top:526.900px;width:.9px;height:4.200px;background:#666"></span>
<span class="st" style="left:897px;font-size:7.300px;color:#555">100%</span>
<svg class="i" style="left:10.60px;top:543.00px;width:8px;height:8px" viewBox="0 0 8 8"><path d="M0 1.100L3.400.6v3.200H0zM3.900.5L8 0v3.800H3.900zM0 4.300h3.400v3.200L0 7zM3.900 4.300H8V8.100L3.900 7.500z" fill="#111"/></svg>
<svg class="i" style="left:39.10px;top:542.50px;width:9px;height:9px" viewBox="0 0 9 9"><circle cx="5.400" cy="3.600" r="2.900" fill="none" stroke="#111" stroke-width=".95"/><path d="M3.400 5.800L.5 8.600" stroke="#111" stroke-width="1"/></svg>
<svg class="i" style="left:66.60px;top:543.00px;width:11px;height:8px" viewBox="0 0 11 8"><rect x=".9" y=".8" width="6.200" height="6.400" fill="none" stroke="#111" stroke-width=".95"/><path d="M.2.800h7.600M.2 7.200h7.600" stroke="#111" stroke-width=".95"/><path d="M9.700.3v3M9.700 4.500v3.200" stroke="#111" stroke-width=".95"/></svg>
<svg class="i" style="left:95.40px;top:539.90px;width:14.400px;height:14.400px" viewBox="0 0 14.400 14.400"><defs><linearGradient id="eg" x1=".1" y1=".9" x2=".9" y2=".1"><stop offset="0" stop-color="#0b4f9c"/><stop offset=".5" stop-color="#1a9ad8"/><stop offset="1" stop-color="#5fd45a"/></linearGradient><linearGradient id="eg2" x1="0" y1="0" x2="0" y2="1"><stop offset="0" stop-color="#1f86d6"/><stop offset="1" stop-color="#0b3f8c"/></linearGradient></defs><circle cx="7.200" cy="7.200" r="7" fill="url(#eg)"/><path d="M.4 8.200C.8 4.800 3.600 3.400 6.400 3.800 4.600 4.800 3.900 6.800 4.500 8.800c.7 2.300 3 3.800 6 3.300-1.300 1.400-3.300 2.100-5.300 1.600C2.400 13 .2 10.800.4 8.200z" fill="url(#eg2)"/><path d="M6.300 8.300c0-1.600 1.300-2.700 3-2.700 2.400 0 4.200 1.400 4.700 3.400-.8.900-2 1.300-3.300 1.200-.9-.1-1.300-.5-1.200-1 .1-.4.400-.6.300-1.100-.1-.6-.7-1-1.400-1-.9 0-1.600.6-1.700 1.500-.2-.1-.4-.2-.4-.3z" fill="#e4eaf4"/></svg>
<span class="abs" style="left:117.300px;top:534.900px;width:26.800px;height:23.800px;background:rgba(255,255,255,.5)"></span>
<span class="abs" style="left:117.300px;top:557.600px;width:26.800px;height:1.300px;background:#1f69c9"></span>
<span class="abs" style="left:148px;top:557.600px;width:24px;height:1.300px;background:#1f69c9"></span>
<svg class="i" style="left:124.00px;top:540.90px;width:14px;height:12.6px" viewBox="0 0 14 12.6"><rect x="4" y="0" width="10" height="12.600" rx="1" fill="#2b7cd3"/><rect x="4" y="0" width="10" height="3.200" fill="#41a5ee"/><rect x="4" y="6.300" width="10" height="3.200" fill="#185abd"/><rect x="4" y="9.400" width="10" height="3.200" rx=".8" fill="#103f91"/><rect x="0" y="2.600" width="7.600" height="7.600" rx=".8" fill="#185abd"/><text x="3.800" y="8.300" text-anchor="middle" font-size="5.400" font-weight="700" font-family="Liberation Sans,sans-serif" fill="#fff">W</text></svg>
<svg class="i" style="left:153.50px;top:540.80px;width:13px;height:13px" viewBox="0 0 13 13"><rect width="13" height="13" rx="2.200" fill="#1a6df6"/><path d="M1.800 8.400L4.600 5l1.800 2-1.800 2.300zM5.200 8.400L8.300 4.400l3.200 4-1.700 1.400-1.500-1.400-1.500 1.400z" fill="#fff"/></svg>
<svg class="i" style="left:716.90px;top:542.80px;width:5px;height:9px" viewBox="0 0 5 9"><path d="M1.300 0v2.200M3.700 0v2.200" stroke="#fff" stroke-width="1"/><path d="M.3 2.200h4.400v2.200c0 1.200-.9 2-2.200 2S.3 5.600.3 4.400z" fill="#fff" stroke="#8a8a8a" stroke-width=".4"/><path d="M2.500 6.400V9" stroke="#fff" stroke-width="1.200"/></svg>
<span class="abs" style="left:723.600px;top:542.600px;width:20px;height:9.600px;background:#fff;border-radius:1.500px;border:.5px solid #c9c9c9"></span>
<span class="abs" style="left:724.600px;top:543.500px;width:17.600px;height:7.800px;background:#1c9b48"></span>
<span class="abs" style="left:743.600px;top:545.400px;width:1.200px;height:4px;background:#fff"></span>
<span class="tk" style="left:733.400px;top:547.500px;font-size:5.600px;font-weight:700;color:#fff">98%</span>
<svg class="i" style="left:749.20px;top:545.40px;width:6px;height:3.6px" viewBox="0 0 6 3.6"><path d="M.4 3.300L3 .6l2.600 2.700" fill="none" stroke="#222" stroke-width=".9"/></svg>
<svg class="i" style="left:763.00px;top:544.50px;width:7.6px;height:7px" viewBox="0 0 7.6 7"><path d="M.5 6.800A6.200 6.200 0 0 1 6.700.6" fill="none" stroke="#666" stroke-width=".7"/><path d="M2.500 6.800a4.200 4.200 0 0 1 4.200-4.200" fill="none" stroke="#666" stroke-width=".7"/><path d="M4.500 6.800a2.200 2.200 0 0 1 2.200-2.200" fill="none" stroke="#333" stroke-width=".8"/><circle cx="6.400" cy="6.500" r=".8" fill="#222"/></svg>
<svg class="i" style="left:775.70px;top:544.30px;width:10px;height:6.6px" viewBox="0 0 10 6.6"><path d="M2.600 6.200a2.200 2.200 0 0 1-.3-4.400A3 3 0 0 1 8 2.600a1.900 1.900 0 0 1-.2 3.600z" fill="#e8e8ee" stroke="#555" stroke-width=".9"/></svg>
<svg class="i" style="left:792.10px;top:542.50px;width:5px;height:9.6px" viewBox="0 0 5 9.6"><rect x=".5" y="0" width="4" height="6.800" rx="1.700" fill="#141414"/><path d="M.2 5.600c.3 1.600 1.200 2.200 2.300 2.200s2-.6 2.300-2.200" fill="none" stroke="#333" stroke-width=".7"/><path d="M2.500 7.800v1.400M1.200 9.300h2.600" stroke="#333" stroke-width=".7"/></svg>
<svg class="i" style="left:804.40px;top:543.60px;width:9.6px;height:7.6px" viewBox="0 0 9.6 7.6"><path d="M.4 2.600h1.800L4.400.6v6.400L2.200 5H.4z" fill="none" stroke="#333" stroke-width=".7"/><path d="M5.600 2.600c.6.700.6 1.700 0 2.400M6.800 1.600c1.100 1.300 1.100 3.100 0 4.400M8 .6c1.600 1.900 1.600 4.500 0 6.400" fill="none" stroke="#555" stroke-width=".6"/></svg>
<svg class="i" style="left:818.80px;top:544.70px;width:10.4px;height:5.6px" viewBox="0 0 10.4 5.6"><rect x="1.600" y=".3" width="8.400" height="5" rx=".6" fill="#111"/><rect x="0" y="1.600" width="1.600" height="2.400" fill="#111"/><rect x="3" y="1.400" width="5.600" height="2.800" fill="#3a3a3a"/></svg>
<span class="tk" style="left:837.500px;top:547.200px;font-size:9.600px;color:#111">中</span>
<span class="tk" style="left:865.300px;top:542px;font-size:7.500px;color:#222">20:01</span>
<span class="tk" style="left:865.500px;top:552.500px;font-size:7.500px;color:#222">2022/7/5</span>
<svg class="i" style="left:895.60px;top:542.70px;width:9.6px;height:8.6px" viewBox="0 0 9.6 8.6"><path d="M.5.500h8.600v5.800H7.600L6 8l-1-1.700H.5z" fill="none" stroke="#222" stroke-width=".8"/><circle cx="7.600" cy="6.600" r="1" fill="#dde1ec" stroke="#222" stroke-width=".6"/></svg>
<span class="abs" style="left:917.400px;top:536px;width:.6px;height:22px;background:#cdd1dc"></span>
<span class="abs" style="left:1px;top:562.900px;width:115.200px;height:28px;background:#0a0a0b"></span>
<svg class="i" style="left:1.400px;top:566.300px;width:10.200px;height:9px" viewBox="0 0 10.200 9"><rect x=".2" y=".2" width="9.800" height="6.400" rx=".8" fill="#f4f4f4"/><rect x="2.600" y="7.800" width="5" height="1.200" fill="#e8e8e8"/><path d="M3.200 5.200c.3-1.500 1.300-2.200 2.700-2.200V2l2 1.700-2 1.700v-1c-1.200 0-1.900.3-2.700.8z" fill="#1a1a1a"/></svg>
<svg class="i" style="left:13.400px;top:566px;width:9.200px;height:11.500px" viewBox="0 0 8 10"><rect x="2.400" y=".4" width="3.200" height="5.600" rx="1.600" fill="#e9e9e9"/><path d="M1 4.600c0 2 1.300 3.100 3 3.100s3-1.100 3-3.100" fill="none" stroke="#e0e0e0" stroke-width=".8"/><path d="M4 7.700v1.500" stroke="#e0e0e0" stroke-width=".8"/><path d="M.4 9.200L7.600.4" stroke="#e8312a" stroke-width="1.100"/></svg>
<span class="abs" style="left:24.600px;top:565.600px;font-size:11.100px;line-height:13px;color:#f4f4f4;white-space:nowrap">吕超凡的屏幕共享</span>
<div id="panel" class="abs"></div>
<div class="card" style="top:38.25px"><svg class="av" viewBox="0 0 40 40"><defs><clipPath id="c1"><circle cx="20" cy="20" r="19"/></clipPath></defs><circle cx="20" cy="20" r="20" fill="#fdfdfd"/><g clip-path="url(#c1)"><circle cx="8.500" cy="7" r="4.800" fill="#f1b138"/><circle cx="33.500" cy="9.500" r="4.800" fill="#f1b138"/><circle cx="8.300" cy="7" r="2.500" fill="#f7d68a"/><circle cx="33.700" cy="9.300" r="2.500" fill="#f7d68a"/><path d="M2.500 25C2 11 9 2 20 2s17.500 8 17.500 20c0 5-1 9-3 12l-4-12L20 9 7 17l-1 9z" fill="#f6c445"/><path d="M5.500 16.500L19.500 6 34 19.500l-2 6-3.500-8L19.500 10 8 18.500 6.500 24z" fill="#fdf6e6"/><ellipse cx="18.800" cy="26" rx="12.300" ry="10.600" fill="#fbe8d3"/><path d="M6.500 25.500c0-7 5-13.500 13-14.500 6 2 10.500 7 11.500 13.500-2-1-4-3-5-6-.5 2.500-2.500 4.500-5 5.500.5-1.200.6-2.400.4-3.600-2 3-5.500 5-9.500 5.300.6-1 .9-2 .9-3-1.800 1.500-3.800 2.300-6.300 2.800z" fill="#8c5b3b"/><path d="M31 23c1.500 1 3 3.500 3 7l-3 6-2-3c1.500-3 2.300-6.500 2-10z" fill="#f3b64a"/><path d="M2.500 25c1.500.5 3.500 2.500 4.500 6 .8 3 2.500 5.500 5 7l-4 2c-3-3-5.500-8-5.500-15z" fill="#e3ae78"/><ellipse cx="10.600" cy="25.600" rx="2.700" ry="3.200" fill="#3e97ea"/><ellipse cx="24.600" cy="25.300" rx="2.700" ry="3.200" fill="#3e97ea"/><ellipse cx="10.600" cy="24.700" rx="1.400" ry="1.500" fill="#1c4d9c"/><ellipse cx="24.600" cy="24.400" rx="1.400" ry="1.500" fill="#1c4d9c"/><circle cx="11.400" cy="26.600" r=".7" fill="#dff1ff"/><circle cx="25.400" cy="26.300" r=".7" fill="#dff1ff"/><ellipse cx="7.800" cy="30" rx="2.200" ry="1.300" fill="#f5b7a2"/><ellipse cx="28" cy="30" rx="2.200" ry="1.300" fill="#f5b7a2"/><path d="M16.500 31.300c1 .6 2.200.6 3.200 0" fill="none" stroke="#b58868" stroke-width=".6"/><ellipse cx="18.500" cy="36.300" rx="2.700" ry="1.900" fill="#e27450"/><path d="M22 36c3-.5 6-2.500 8-5l2 2c-2 3-5 5.500-9 6.500z" fill="#fdf6e6"/></g></svg><div class="lab" style="padding-left:28.5px;padding-right:3px"><svg viewBox="0 0 12 11" style="left:1px;top:2.2px;width:12px;height:11px"><rect x="0.6" y="0.8" width="10.6" height="7" rx="0.8" fill="#f2f2f2"/><rect x="3" y="9" width="6" height="1.1" fill="#e8e8e8"/><path d="M3.600 6.200c.3-1.700 1.400-2.500 3-2.500V2.600l2.200 1.900-2.200 1.900V5.200c-1.300 0-2.200.3-3 1z" fill="#1a1a1a"/></svg><svg class="mic" style="left:14.6px" viewBox="0 0 10 11"><rect x="3.1" y="0.8" width="3.8" height="6.2" rx="1.9" fill="#e6e6e6"/><path d="M1.4 5.2c0 2.200 1.600 3.500 3.600 3.500s3.600-1.300 3.600-3.500" fill="none" stroke="#e6e6e6" stroke-width="0.9"/><path d="M5 8.700v1.400M3.400 10.200h3.200" stroke="#e6e6e6" stroke-width="0.9"/><path d="M1.200 9.200L8.800 1.400" stroke="#e8312a" stroke-width="1.100"/></svg>吕超凡的屏幕共享</div></div>
<div class="card" style="top:126.80px"><svg class="av" viewBox="0 0 40 40"><defs><clipPath id="c2"><circle cx="20" cy="20" r="20"/></clipPath><radialGradient id="g2" cx="62%" cy="50%" r="62%"><stop offset="0" stop-color="#ecdcb8"/><stop offset=".65" stop-color="#d8c193"/><stop offset="1" stop-color="#b3976a"/></radialGradient><filter id="b2" x="-20%" y="-20%" width="140%" height="140%"><feGaussianBlur stdDeviation=".7"/></filter></defs><g clip-path="url(#c2)"><rect width="40" height="40" fill="url(#g2)"/><g filter="url(#b2)"><path d="M6 3h26l2 5-9 4-10 2-9-3z" fill="#6b503a" opacity=".8"/><path d="M15 4l6-.5 3 4-2 4-6 1-3-4z" fill="#2e211b" opacity=".85"/><path d="M24 5l4 2-1 4-3 1z" fill="#3f2c22" opacity=".7"/><path d="M1 12l9-3 6 3.500-1 6-6 4-8 1z" fill="#ad6a4b" opacity=".9"/><path d="M0 21l7-1.500 3 2-1 3.500-9 1z" fill="#5f5236" opacity=".8"/><path d="M29 9c4 1 8 5 10 11l-1 10c-2-7-5-14-9-21z" fill="#e6d3a6"/><path d="M11.500 25c-.5-4 0-7 1.500-9.500l3 2.500c2-1 5-1 7.500 0l3.500-2.500c1.500 2.500 2 5 1.500 8 3 1 5 4 5 7.500 0 4-3 7-9 8-5 .8-10 0-12-3-1.500-2.500-1.500-7-1.500-11z" fill="#f4ead6"/><path d="M14 28c1-2.500 3.500-4 6-4s5 1.500 6 4.500-2 5.500-6 5.500-7-2.500-6-6z" fill="#faf3e4"/><path d="M12 33c3 4 12 5 17 2l-2 4H14z" fill="#b9ad96"/><path d="M17.500 23.500l1 .8M23 23.500l-1 .8" stroke="#a89476" stroke-width=".7"/></g></g></svg><div class="lab"><svg class="mic" style="left:3.2px" viewBox="0 0 10 11"><rect x="3.1" y="0.8" width="3.8" height="6.2" rx="1.9" fill="#e6e6e6"/><path d="M1.4 5.2c0 2.200 1.600 3.500 3.600 3.500s3.600-1.300 3.600-3.500" fill="none" stroke="#e6e6e6" stroke-width="0.9"/><path d="M5 8.700v1.400M3.400 10.200h3.200" stroke="#e6e6e6" stroke-width="0.9"/><path d="M1.200 9.200L8.800 1.400" stroke="#e8312a" stroke-width="1.100"/></svg>郭才豪</div></div>
<div class="card" style="top:215.35px"><svg class="av" viewBox="0 0 40 40"><defs><clipPath id="c3"><circle cx="20" cy="20" r="18.800"/></clipPath></defs><circle cx="20" cy="20" r="20" fill="#e9531f"/><g clip-path="url(#c3)"><rect width="40" height="40" fill="#3b4263"/><path d="M0 6l16-4 4 8-8 8-12 2z" fill="#2a2f4c"/><path d="M26 16l14-6v20H30z" fill="#20233a"/><path d="M0 14c5-1 10 1 14 6l8 4 6 8H0z" fill="#f2f2f7"/><path d="M3 26c4-2 9-1 12 2l2 4H2z" fill="#d8dcec"/><path d="M15.500 .5l14.500 1.500 1 9.500-17-1z" fill="#e9e8f4"/><path d="M14.300 9l16.700 1.200.2 1.800-17-1z" fill="#a9a6c8"/><path d="M9.500 12c3-2 7-2.500 12-2 5 .5 9 1.500 11.500 3.500-3 1.500-8 2-12.500 1.500-4.500-.5-9-1.500-11-3z" fill="#dedcee"/><path d="M17 15.500c2-1 7-1 9 .5l-1 6-4 2.500-3.500-3z" fill="#f0d5c4"/><path d="M15.500 15c3-1.200 8-1 11 .8l-.5 2.200c-3-1.500-7-1.800-10-.5z" fill="#23263d"/><path d="M24 17c2-1.500 4.500-.5 5 2l-1 6-3 1.500-1.500-5z" fill="#e9e9f3"/><path d="M17.500 24l3.500 1.500 2-1 1 6h-8z" fill="#5c68a8"/><path d="M20.500 25.500l1 .2.300 3.500-1.200.3z" fill="#d23a3a"/><path d="M0 29.500c8-1.500 28-2.500 40-1V40H0z" fill="#d9271d"/><path d="M0 29c8-1.500 28-2.500 40-1.200v1.200C28 27.800 8 28.800 0 30.200z" fill="#f4e6dc"/></g><text x="25.500" y="36.800" font-size="7.500" font-family="Liberation Serif,'Noto Serif CJK SC',serif" font-weight="700" fill="#fff">灯</text><text x="9" y="36" font-size="3.800" font-family="Liberation Serif,'Noto Serif CJK SC',serif" fill="#f8e8e0">点亮你的</text></svg><div class="lab" style="padding-left:31.4px"><span style="position:absolute;left:0;top:0.6px;width:14px;height:14.4px;background:#f5821f"><svg viewBox="0 0 14 14" style="left:0;top:0;width:14px;height:14px"><circle cx="7" cy="5" r="2.300" fill="#fff"/><path d="M2.600 12c0-2.900 1.900-4.300 4.400-4.300s4.400 1.400 4.400 4.300z" fill="#fff"/></svg></span><svg class="mic" style="left:17.6px" viewBox="0 0 10 11"><rect x="3.1" y="0.8" width="3.8" height="6.2" rx="1.9" fill="#f3f3f3"/><path d="M1.4 5.2c0 2.200 1.600 3.500 3.600 3.500s3.600-1.300 3.600-3.500" fill="none" stroke="#f3f3f3" stroke-width="0.9"/><path d="M5 8.700v1.400M3.400 10.200h3.200" stroke="#f3f3f3" stroke-width="0.9"/></svg>云正兴</div></div>
<div class="card" style="top:303.90px"><svg class="av" viewBox="0 0 40 40"><defs><clipPath id="c4"><circle cx="20" cy="20" r="20"/></clipPath></defs><g clip-path="url(#c4)"><rect width="40" height="40" fill="#1c1f20"/><path d="M9 2h22l3 5H6z" fill="#3a403c"/><path d="M19 0h3l3.500 6.500h-10z" fill="#c2c6b4"/><rect x="17" y="5.500" width="7" height="1.600" fill="#e6e8d4"/><rect x="4.500" y="8" width="4.500" height="9" fill="#6b4a2a"/><rect x="5.300" y="8.800" width="2.900" height="7.400" fill="#24262a"/><rect x="2" y="12" width="2" height="4" fill="#c9c9c2"/><rect x="27.500" y="7.500" width="8.500" height="9.500" fill="#b99438"/><rect x="28.500" y="8.500" width="6.500" height="7.500" fill="#1f2a2a"/><path d="M29.500 10h4.500M29.500 12h4M30 14h3.500" stroke="#cfd6c6" stroke-width=".8"/><rect x="29" y="16.800" width="5" height="1.300" fill="#d9b340"/><path d="M0 18h12v16H2z" fill="#5a3524"/><path d="M1 19h4.500v13H1zM6.500 19H11v13H6.500z" fill="#6e4530"/><rect x="25.500" y="20" width="4.500" height="5" fill="#e9e9e4"/><path d="M29 21h11v7H29z" fill="#7d5a3a"/><path d="M30 22.500h9" stroke="#a8835a" stroke-width="1.200"/><circle cx="33.500" cy="24.500" r="1.300" fill="#e4e6ea"/><path d="M0 33c8-3 30-5 40-4v11H0z" fill="#9a6328"/><path d="M22 30c6-2 13-2 18-1v4c-6 0-12 1-18 3z" fill="#b57a34"/><ellipse cx="20.500" cy="11" rx="6.300" ry="4.600" fill="#262a55"/><rect x="14.200" y="11.500" width="12.600" height="2.600" rx="1.200" fill="#1d2046"/><path d="M14.500 14c1-1 11-1 12 0 .5 4-1.500 8.500-6 9-4.500-.5-6.500-5-6-9z" fill="#e9b981"/><path d="M17.500 16.500c1.500-1 4.500-1 6 0 .5 3-1 6-3 6.300-2-.3-3.500-3.300-3-6.300z" fill="#fbf4ea"/><ellipse cx="20.500" cy="20.500" rx="1.300" ry="1.500" fill="#d45a6a"/><path d="M18 16.500l1.500.5M23 16.500l-1.500.5" stroke="#2a1c14" stroke-width=".7"/><path d="M12.500 26c0-3 3.500-4.500 8-4.500s8 1.500 8 4.500v7c0 2-3 3-8 3s-8-1-8-3z" fill="#34386e"/><path d="M13 25.500h15M12.500 28.500h16M12.500 31.500h16M16 22v14M20.500 21.500V36M25 22v14" stroke="#8a7fae" stroke-width=".7" opacity=".9"/><path d="M14 33.500h4v5h-3.500zM22.500 33.500h4l-.5 5h-3.500z" fill="#f3ecdf"/></g></svg><div class="lab"><svg class="mic" style="left:3.2px" viewBox="0 0 10 11"><rect x="3.1" y="0.8" width="3.8" height="6.2" rx="1.9" fill="#e6e6e6"/><path d="M1.4 5.2c0 2.200 1.600 3.500 3.600 3.500s3.600-1.300 3.600-3.500" fill="none" stroke="#e6e6e6" stroke-width="0.9"/><path d="M5 8.700v1.400M3.400 10.200h3.200" stroke="#e6e6e6" stroke-width="0.9"/><path d="M1.200 9.200L8.800 1.400" stroke="#e8312a" stroke-width="1.100"/></svg>陈晗</div></div>
<div class="card" style="top:392.45px"><svg class="av" viewBox="0 0 40 40"><defs><clipPath id="c5"><circle cx="20" cy="20" r="20"/></clipPath></defs><g clip-path="url(#c5)"><rect width="40" height="40" fill="#e4e3df"/><rect width="40" height="17" fill="#b9bec3"/><rect y="0" width="40" height="5" fill="#20292a"/><rect x="5" y="5" width="11" height="10" fill="#c3c8cd"/><rect x="25" y="5" width="9" height="10" fill="#c6cbd0"/><rect y="14.800" width="40" height="2.200" fill="#2a3436"/><ellipse cx="3.500" cy="13" rx="3" ry="3.800" fill="#1d2a2c"/><ellipse cx="36.500" cy="12" rx="2" ry="3" fill="#2c3a3a"/><rect y="17" width="40" height="1.600" fill="#f4f4f2"/><path d="M17 3l2.500-2 1.500 5-3 3.500z" fill="#4d8a80"/><path d="M19.500 1l2 1v6h-2z" fill="#c9cbc8"/><ellipse cx="21.500" cy="8.500" rx="4.600" ry="3.600" fill="#4b4b4d"/><ellipse cx="22.300" cy="10.800" rx="2.600" ry="2.800" fill="#f2e4d8"/><path d="M16.500 9c-1 3-1.500 7-1 11l2-1 .5-9z" fill="#3b3b3d"/><path d="M17 14c2-2 8-2 10 0l2.500 7-1.500 4 1 12.500c-4 2-12 2-16 0l1.500-10-1-6z" fill="#e5dfd0"/><path d="M19.500 13.500l2.500 4 2.500-4 1 10-3.500 3-3.500-3z" fill="#f3efe6"/><path d="M17.500 26l4.500 2 4.500-2 1 11h-11z" fill="#dbd4c3"/><path d="M22.500 22L12 34" stroke="#34353a" stroke-width="1.100"/><path d="M15 30.500L12 34" stroke="#c3423a" stroke-width="1.300"/><ellipse cx="21.500" cy="25.300" rx="1.700" ry="1.200" fill="#2d2e33"/></g></svg><div class="lab"><svg class="mic" style="left:3.2px" viewBox="0 0 10 11"><rect x="3.1" y="0.8" width="3.8" height="6.2" rx="1.9" fill="#e6e6e6"/><path d="M1.4 5.2c0 2.200 1.600 3.500 3.600 3.500s3.600-1.300 3.600-3.500" fill="none" stroke="#e6e6e6" stroke-width="0.9"/><path d="M5 8.700v1.400M3.400 10.200h3.200" stroke="#e6e6e6" stroke-width="0.9"/><path d="M1.200 9.200L8.800 1.400" stroke="#e8312a" stroke-width="1.100"/></svg>王乐瑶</div></div>
<div class="card" style="top:481.00px"><svg class="av" viewBox="0 0 40 40"><defs><clipPath id="c6"><circle cx="20" cy="20" r="20"/></clipPath></defs><g clip-path="url(#c6)"><rect width="40" height="40" fill="#b4cde2"/><rect width="40" height="14.500" fill="#6d4548"/><rect x="8" y="0" width="8" height="9" fill="#9a7a7c"/><rect x="16.500" y="0" width="5" height="13" fill="#c9b9a4"/><rect x="22" y="1" width="5" height="12" fill="#7f8ea8"/><rect x="27.500" y="0" width="3.500" height="13" fill="#3a2430"/><rect x="31.500" y="2" width="5" height="11" fill="#8a6a72"/><path d="M0 10h40v4.500H0z" fill="#4a2a30"/><path d="M4.500 11c.5-2.500 2-3.800 5-3.800h3.500c2 0 3 1.200 3.500 3.800v2H4.500z" fill="#f1ede6"/><path d="M7 8.300h6l1 2H6z" fill="#9aa0aa"/><rect x="16" y="9" width="5" height="4.500" fill="#e9d9b8"/><rect y="14.500" width="40" height="2" fill="#f7f8fa"/><ellipse cx="11" cy="21" rx="3" ry=".9" fill="#eef3f8"/><ellipse cx="17" cy="21.300" rx="1.300" ry=".8" fill="#f4f6f9"/><path d="M0 34c3-4 6-7 9-8 3 0 5 1 7 1 2-2 4-3 6-3l4 3 6 2 8-2v13H0z" fill="#3f6f9f"/><path d="M4 33c2-2 4-3.500 6-3.500l3 2-3 3-4 1z" fill="#e5edf4"/><path d="M12 28l4-1 3 2-3 2z" fill="#9cc0dd"/><path d="M0 38c4-2 9-3 13-2l6 4H0z" fill="#d9cdb8"/><circle cx="28" cy="21.500" r="6.200" fill="#6b3c24"/><path d="M22.500 19c1-3.500 4-5 7-4.500 3 .5 5 3 4.500 6l-3-1-4 1.500z" fill="#5a3120"/><path d="M30 24.500c1.500-.5 3 0 3.500 1.500l-.5 3-3 .5z" fill="#eac4a8"/><path d="M21 31c2-3 6-4.500 10-3.500l4 3 2 9.500H19z" fill="#4a78a8"/><path d="M27 28.500l4 .5 1 3-4 1z" fill="#e9eef2"/><path d="M19 36c2-3 5-5 8-5l2 2-5 7h-5z" fill="#c5d3de"/></g></svg><div class="lab" style="padding-left:3.2px;padding-right:3.4px">刘明阳</div></div>
<div id="tip" class="abs"><svg style="position:absolute;left:8px;top:7.2px;width:10px;height:11px" viewBox="0 0 10 11"><rect x="3.1" y="0.8" width="3.8" height="6.2" rx="1.9" fill="#6f7378"/><path d="M1.4 5.2c0 2.200 1.600 3.500 3.600 3.500s3.600-1.300 3.600-3.500" fill="none" stroke="#6f7378" stroke-width="0.9"/><path d="M5 8.700v1.400M3.400 10.200h3.200" stroke="#6f7378" stroke-width="0.9"/><path d="M1.200 9.200L8.800 1.400" stroke="#d8413a" stroke-width="1.100"/></svg><span class="abs" style="left:25.2px;top:4.5px;width:1px;height:16px;background:#1b1d20"></span><span class="tl" style="left:32px;top:12.8px;font-size:8.1px;color:#f0f0f0">正在讲话:</span><svg viewBox="0 0 34 18" style="position:absolute;left:130.5px;top:4px;width:34px;height:18px"><defs><linearGradient id="lg" x1="0" y1="0" x2="1" y2="1"><stop offset="0" stop-color="#5a5d62"/><stop offset="1" stop-color="#3a3d41"/></linearGradient></defs><path d="M1 10.500L9.500 1.500l7 7.500-6.500 7.500z" fill="url(#lg)" opacity=".85"/><path d="M12.500 11L22 1l10.500 10.500-6 5.500-5-4.500-5 4.500z" fill="url(#lg)"/></svg></div>
</div></div>
</body>
</html>
